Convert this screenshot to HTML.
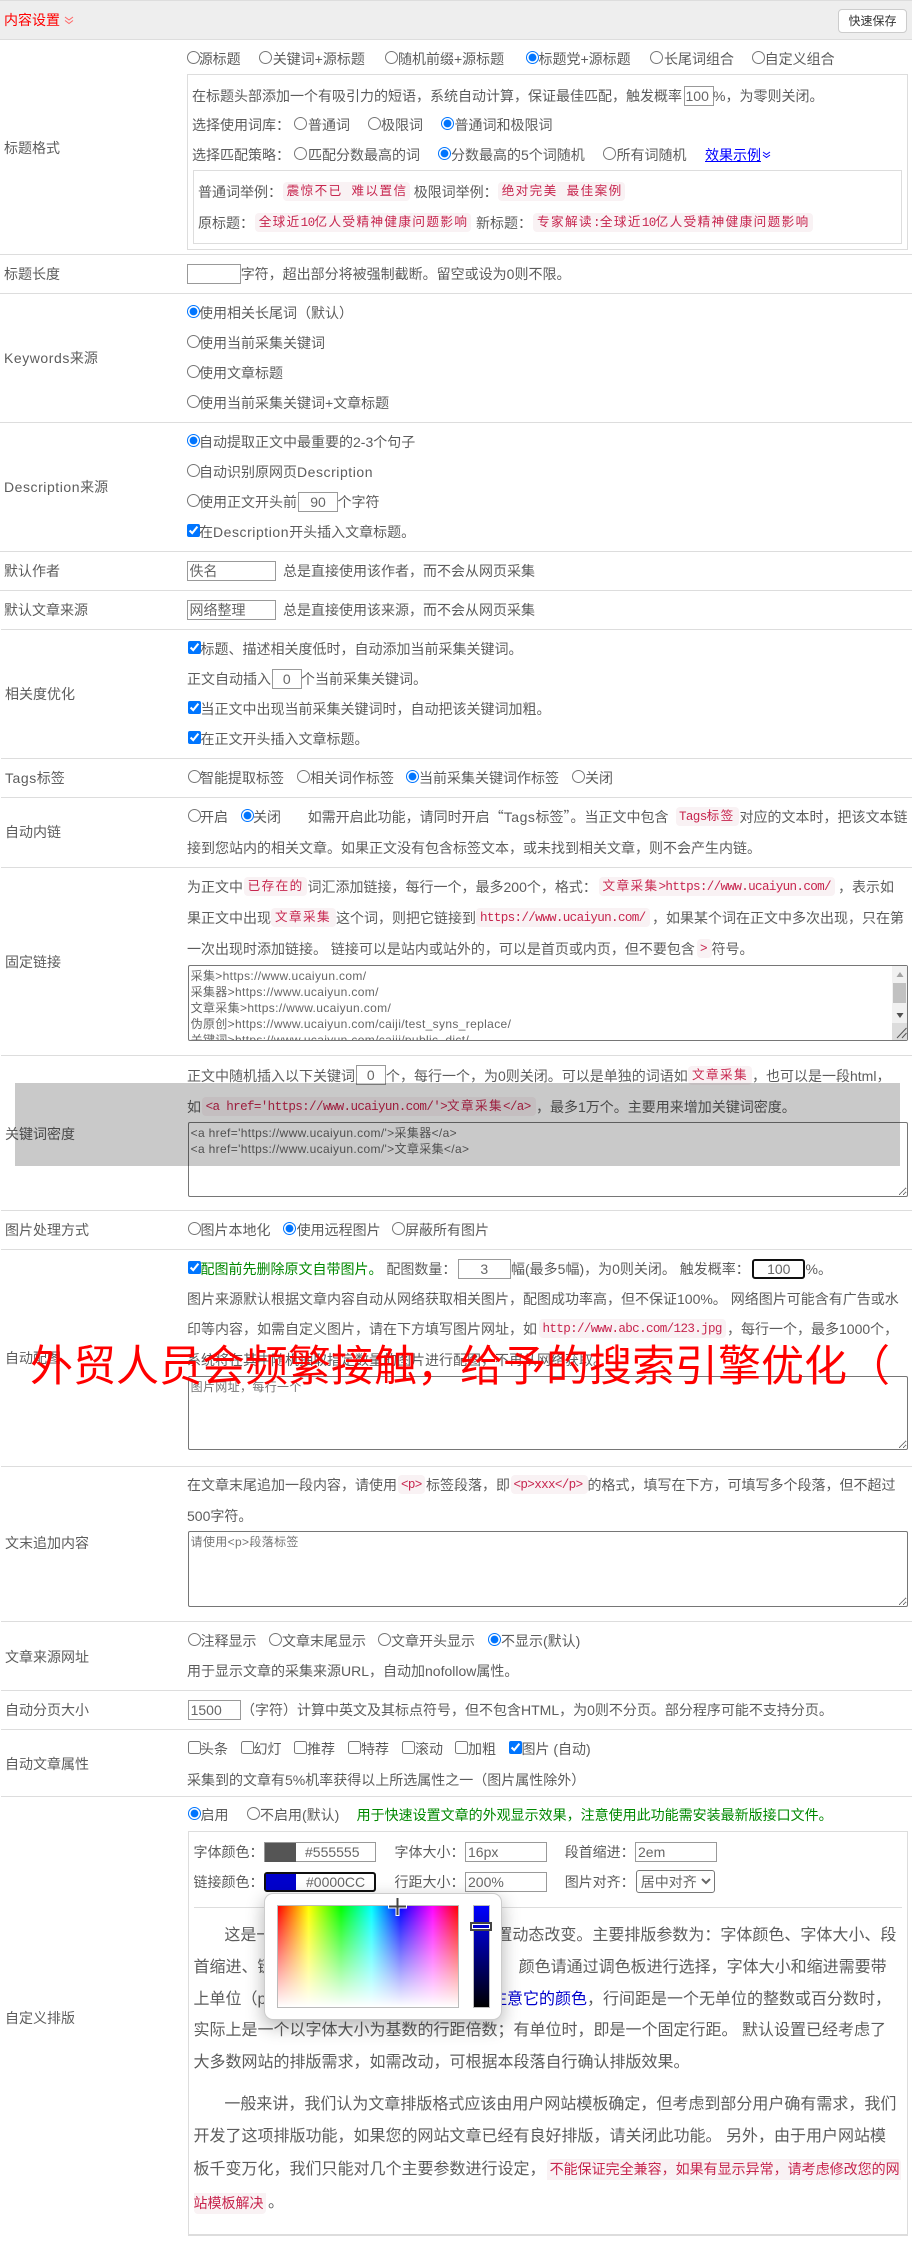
<!DOCTYPE html>
<html lang="zh"><head><meta charset="utf-8"><title>内容设置</title>
<style>
html,body{margin:0;padding:0;background:#fff}
body{position:relative;width:912px;height:2249px;overflow:hidden;font:14px/20px "Liberation Sans","Noto Sans CJK SC",sans-serif;color:#5c5c5c}
.hr{position:absolute;left:0;width:912px;height:1px;background:#ddd}
.l{position:absolute;left:0;width:912px;height:20px;line-height:20px;white-space:nowrap}
.l>*{position:absolute;top:0}
.l>input[type=radio],.l>input[type=checkbox]{top:2px;margin:0;width:13px;height:13px}
.i{box-sizing:border-box;height:20px;margin:0;padding:0 2px;border:1px solid #999;font:14px "Liberation Sans","Noto Sans CJK SC",sans-serif;color:#666;background:#fff;border-radius:0;outline:0}
.ctr{text-align:center}
.c{font:12.6px/21px "Liberation Mono","Noto Sans CJK SC",monospace;color:#c7254e;background:#f9f2f4;border-radius:4px;letter-spacing:1.4px;padding:0 4px;height:19px;white-space:nowrap;box-sizing:border-box;overflow:hidden}
.c b{font-weight:400;letter-spacing:-.66px}
.e{letter-spacing:.55px}
.q{font-family:"Noto Sans CJK SC",sans-serif}
.box{position:absolute;box-sizing:border-box;border:1px solid #ddd}
textarea{position:absolute;box-sizing:border-box;margin:0;padding:2px;border:1px solid #767676;border-radius:2px;font:12px/16px "Liberation Sans","Noto Sans CJK SC",sans-serif;letter-spacing:.35px;color:#666;background:#fff;overflow:hidden;outline:0}
.p{font-size:16px}
</style></head><body>

<div class="hr" style="top:0"></div>
<div style="position:absolute;left:0;top:1px;width:912px;height:38px;background:#eee"></div>
<div class="hr" style="top:39px"></div>
<div class="l" style="top:10px;color:#f00"><span style="left:4px">内容设置</span></div>
<svg style="position:absolute;left:64px;top:16px" width="10" height="9" viewBox="0 0 10 9" fill="none" stroke="#f66" stroke-width="1"><path d="M1 1l4 3 4-3M1 4.500l4 3 4-3"/></svg>
<div style="position:absolute;left:838px;top:9px;width:69px;height:24px;box-sizing:border-box;background:#fff;border:1px solid #ccc;border-radius:4px;font-size:12px;line-height:23px;text-align:center;color:#333">快速保存</div>

<!-- 标题格式 -->
<div class="l" style="top:49px">
<input type="radio" style="left:186.500px"><span style="left:198.700px">源标题</span>
<input type="radio" style="left:258.700px"><span style="left:272.700px">关键词+源标题</span>
<input type="radio" style="left:384.600px"><span style="left:398px">随机前缀+源标题</span>
<input type="radio" checked style="left:525.600px"><span style="left:538.500px">标题党+源标题</span>
<input type="radio" style="left:650px"><span style="left:664px">长尾词组合</span>
<input type="radio" style="left:752px"><span style="left:764.600px">自定义组合</span>
</div>
<div class="l" style="top:138px"><span style="left:4px">标题格式</span></div>
<div class="box" style="left:186.500px;top:74px;width:721px;height:176px"></div>
<div class="l" style="top:86px"><span style="left:192px">在标题头部添加一个有吸引力的短语，系统自动计算，保证最佳匹配，触发概率</span>
<input class="i" value="100" style="left:683.500px;width:30px;padding:0 1px"><span style="left:713px">%，为零则关闭。</span></div>
<div class="l" style="top:115px"><span style="left:192px">选择使用词库：</span>
<input type="radio" style="left:294.300px"><span style="left:308px">普通词</span>
<input type="radio" style="left:368px"><span style="left:381px">极限词</span>
<input type="radio" checked style="left:441px"><span style="left:454.500px">普通词和极限词</span></div>
<div class="l" style="top:145px"><span style="left:192px">选择匹配策略：</span>
<input type="radio" style="left:294.300px"><span style="left:308px">匹配分数最高的词</span>
<input type="radio" checked style="left:437.600px"><span style="left:451px">分数最高的5个词随机</span>
<input type="radio" style="left:603px"><span style="left:616.500px">所有词随机</span>
<span style="left:705px;color:#00f;text-decoration:underline">效果示例</span></div>
<svg style="position:absolute;left:762px;top:151px" width="9" height="8" viewBox="0 0 9 8" fill="none" stroke="#00f" stroke-width="1"><path d="M1 1l3.500 2.500L8 1M1 4l3.500 2.500L8 4"/></svg>
<div class="box" style="left:193px;top:170px;width:708.500px;height:74px"></div>
<div class="l" style="top:182px"><span style="left:198px">普通词举例：</span><span class="c" style="left:282.600px;width:127px">震惊不已 难以置信</span>
<span style="left:413.700px">极限词举例：</span><span class="c" style="left:497.700px;width:127px">绝对完美 最佳案例</span></div>
<div class="l" style="top:213px"><span style="left:198px">原标题：</span><span class="c" style="left:254.700px;width:216.500px">全球近<b>10</b>亿人受精神健康问题影响</span>
<span style="left:476px">新标题：</span><span class="c" style="left:533px;width:280px">专家解读<b>:</b>全球近<b>10</b>亿人受精神健康问题影响</span></div>
<div class="hr" style="top:254px"></div>

<!-- 标题长度 -->
<div class="l" style="top:264px"><span style="left:4px">标题长度</span><input class="i" style="left:186.500px;width:54px"><span style="left:240.700px">字符，超出部分将被强制截断。留空或设为0则不限。</span></div>
<div class="hr" style="top:293px"></div>

<!-- Keywords -->
<div class="l" style="top:348px"><span style="left:4px"><span class="e">Keywords</span>来源</span></div>
<div class="l" style="top:303px"><input type="radio" checked style="left:186.500px"><span style="left:199px">使用相关长尾词（默认）</span></div>
<div class="l" style="top:333px"><input type="radio" style="left:186.500px"><span style="left:199px">使用当前采集关键词</span></div>
<div class="l" style="top:363px"><input type="radio" style="left:186.500px"><span style="left:199px">使用文章标题</span></div>
<div class="l" style="top:393px"><input type="radio" style="left:186.500px"><span style="left:199px">使用当前采集关键词+文章标题</span></div>
<div class="hr" style="top:422px"></div>

<!-- Description -->
<div class="l" style="top:477px"><span style="left:4px"><span class="e">Description</span>来源</span></div>
<div class="l" style="top:432px"><input type="radio" checked style="left:186.500px"><span style="left:199px">自动提取正文中最重要的2-3个句子</span></div>
<div class="l" style="top:462px"><input type="radio" style="left:186.500px"><span style="left:199px">自动识别原网页<span class="e">Description</span></span></div>
<div class="l" style="top:492px"><input type="radio" style="left:186.500px"><span style="left:199px">使用正文开头前</span><input class="i ctr" value="90" style="left:298px;width:40px"><span style="left:337.500px">个字符</span></div>
<div class="l" style="top:522px"><input type="checkbox" checked style="left:186.500px"><span style="left:199px">在<span class="e">Description</span>开头插入文章标题。</span></div>
<div class="hr" style="top:551px"></div>

<!-- 默认作者 -->
<div class="l" style="top:561px"><span style="left:4px">默认作者</span><input class="i" value="佚名" style="left:186.500px;width:89px"><span style="left:283px">总是直接使用该作者，而不会从网页采集</span></div>
<div class="hr" style="top:590px"></div>
<div class="l" style="top:600px"><span style="left:4px">默认文章来源</span><input class="i" value="网络整理" style="left:186.500px;width:89px"><span style="left:283px">总是直接使用该来源，而不会从网页采集</span></div>
<div class="hr" style="top:629px;left:1px"></div>

<!-- 相关度优化 -->
<div class="l" style="top:684px"><span style="left:5px">相关度优化</span></div>
<div class="l" style="top:639px"><input type="checkbox" checked style="left:188px"><span style="left:200.500px">标题、描述相关度低时，自动添加当前采集关键词。</span></div>
<div class="l" style="top:669px"><span style="left:187px">正文自动插入</span><input class="i ctr" value="0" style="left:272px;width:29.500px"><span style="left:301px">个当前采集关键词。</span></div>
<div class="l" style="top:699px"><input type="checkbox" checked style="left:188px"><span style="left:200.500px">当正文中出现当前采集关键词时，自动把该关键词加粗。</span></div>
<div class="l" style="top:729px"><input type="checkbox" checked style="left:188px"><span style="left:200.500px">在正文开头插入文章标题。</span></div>
<div class="hr" style="top:758px;left:1px"></div>

<!-- Tags -->
<div class="l" style="top:768px"><span style="left:5px"><span class="e">Tags</span>标签</span>
<input type="radio" style="left:188px"><span style="left:200px">智能提取标签</span>
<input type="radio" style="left:296.600px"><span style="left:310px">相关词作标签</span>
<input type="radio" checked style="left:405.600px"><span style="left:419px">当前采集关键词作标签</span>
<input type="radio" style="left:572px"><span style="left:585px">关闭</span></div>
<div class="hr" style="top:797px;left:1px"></div>

<!-- 自动内链 -->
<div class="l" style="top:822px"><span style="left:5px">自动内链</span></div>
<div class="l" style="top:807px"><input type="radio" style="left:188px"><span style="left:200px">开启</span>
<input type="radio" checked style="left:240.700px"><span style="left:253px">关闭</span>
<span style="left:307.700px">如需开启此功能，请同时开启<span class="q">“</span><span class="e">Tags</span>标签<span class="q">”</span>。当正文中包含</span>
<span class="c" style="left:676px;width:63px;padding:0 3px"><b>Tags</b>标签</span>
<span style="left:739.500px">对应的文本时，把该文本链</span></div>
<div class="l" style="top:838px"><span style="left:187px">接到您站内的相关文章。如果正文没有包含标签文本，或未找到相关文章，则不会产生内链。</span></div>
<div class="hr" style="top:867px;left:1px"></div>

<!-- 固定链接 -->
<div class="l" style="top:952px"><span style="left:5px">固定链接</span></div>
<div class="l" style="top:877px"><span style="left:187px">为正文中</span><span class="c" style="left:243.600px;width:63.500px">已存在的</span>
<span style="left:307.500px">词汇添加链接，每行一个，最多200个，格式：</span>
<span class="c" style="left:598.500px;width:236.500px">文章采集<b>&gt;https://www.ucaiyun.com/</b></span>
<span style="left:838px">，表示如</span></div>
<div class="l" style="top:908px"><span style="left:187px">果正文中出现</span><span class="c" style="left:271px;width:64.700px">文章采集</span>
<span style="left:336px">这个词，则把它链接到</span>
<span class="c" style="left:476px;width:174px"><b>https://www.ucaiyun.com/</b></span>
<span style="left:652px">，如果某个词在正文中多次出现，只在第</span></div>
<div class="l" style="top:939px"><span style="left:187px">一次出现时添加链接。 链接可以是站内或站外的，可以是首页或内页，但不要包含</span>
<span class="c" style="left:697px;width:14.500px;padding:0 3px"><b>&gt;</b></span><span style="left:711.500px">符号。</span></div>
<textarea readonly style="left:187.600px;top:965px;width:720.400px;height:76px;resize:none">采集&gt;https://www.ucaiyun.com/
采集器&gt;https://www.ucaiyun.com/
文章采集&gt;https://www.ucaiyun.com/
伪原创&gt;https://www.ucaiyun.com/caiji/test_syns_replace/
关键词&gt;https://www.ucaiyun.com/caiji/public_dict/</textarea>
<div style="position:absolute;left:891.500px;top:966px;width:15.500px;height:74px;background:#f1f1f1"></div>
<div style="position:absolute;left:893px;top:983px;width:13px;height:20px;background:#c1c1c1"></div>
<div style="position:absolute;left:891.500px;top:1023px;width:15.500px;height:17px;background:#dcdcdc"></div>
<svg style="position:absolute;left:891.500px;top:966px" width="16" height="74" viewBox="0 0 16 74" fill="none"><path d="M8 6l3.500 5h-7z" fill="#a3a3a3"/><path d="M8 52l-3.500-5h7z" fill="#505050"/><path d="M14.500 62L5 72M14.500 67L10 72" stroke="#555" stroke-width="1"/></svg>
<div class="hr" style="top:1055px;left:1px"></div>

<!-- 关键词密度 -->
<div class="l" style="top:1124px"><span style="left:5px">关键词密度</span></div>
<div class="l" style="top:1066px"><span style="left:187px">正文中随机插入以下关键词</span><input class="i ctr" value="0" style="left:355.500px;top:-1px;width:30.500px"><span style="left:386px">个，每行一个，为0则关闭。可以是单独的词语如</span>
<span class="c" style="left:688px;width:64px">文章采集</span><span style="left:752px">，也可以是一段html，</span></div>
<div class="l" style="top:1097px"><span style="left:187px">如</span><span class="c" style="left:201.600px;width:334px"><b>&lt;a href='https://www.ucaiyun.com/'&gt;</b>文章采集<b>&lt;/a&gt;</b></span>
<span style="left:536px">，最多1万个。主要用来增加关键词密度。</span></div>
<textarea readonly style="left:187.600px;top:1122px;width:720.400px;height:75px;resize:both">&lt;a href='https://www.ucaiyun.com/'&gt;采集器&lt;/a&gt;
&lt;a href='https://www.ucaiyun.com/'&gt;文章采集&lt;/a&gt;</textarea>
<div class="hr" style="top:1210px;left:1px"></div>

<!-- 图片处理方式 -->
<div class="l" style="top:1220px"><span style="left:5px">图片处理方式</span>
<input type="radio" style="left:188px"><span style="left:200.500px">图片本地化</span>
<input type="radio" checked style="left:282.600px"><span style="left:296.600px">使用远程图片</span>
<input type="radio" style="left:391.600px"><span style="left:405px">屏蔽所有图片</span></div>
<div class="hr" style="top:1249px;left:1px"></div>

<!-- 自动配图 -->
<div class="l" style="top:1348px"><span style="left:5px">自动配图</span></div>
<div class="l" style="top:1259px"><input type="checkbox" checked style="left:188px"><span style="left:200.500px;color:#080">配图前先删除原文自带图片。</span>
<span style="left:386.400px">配图数量：</span><input class="i ctr" value="3" style="left:457.500px;width:53.500px">
<span style="left:511px">幅(最多5幅)，为0则关闭。 触发概率：</span>
<input class="i ctr" value="100" style="left:752.300px;width:53px;border:2px solid #101010;border-radius:3px"><span style="left:805.500px">%。</span></div>
<div class="l" style="top:1289px"><span style="left:187px">图片来源默认根据文章内容自动从网络获取相关图片，配图成功率高，但不保证100%。 网络图片可能含有广告或水</span></div>
<div class="l" style="top:1319px"><span style="left:187px">印等内容，如需自定义图片，请在下方填写图片网址，如</span><span class="c" style="left:538.500px;width:187.500px"><b>http://www.abc.com/123.jpg</b></span><span style="left:727px">，每行一个，最多1000个，</span></div>
<div class="l" style="top:1350px"><span style="left:187px">系统将在其中随机抽取指定数量的图片进行配图，不再从网络获取。</span></div>
<textarea readonly placeholder="图片网址，每行一个" style="left:187.600px;top:1376px;width:720.400px;height:74px;resize:both"></textarea>
<div class="hr" style="top:1466px;left:1px"></div>

<!-- 文末追加内容 -->
<div class="l" style="top:1533px"><span style="left:5px">文末追加内容</span></div>
<div class="l" style="top:1475px"><span style="left:187px">在文章末尾追加一段内容，请使用</span><span class="c" style="left:398px;width:27.400px;padding:0 3px"><b>&lt;p&gt;</b></span>
<span style="left:426px">标签段落，即</span><span class="c" style="left:510.500px;width:77px;padding:0 3px"><b>&lt;p&gt;xxx&lt;/p&gt;</b></span>
<span style="left:587.500px">的格式，填写在下方，可填写多个段落，但不超过</span></div>
<div class="l" style="top:1506px"><span style="left:187px">500字符。</span></div>
<textarea readonly placeholder="请使用&lt;p&gt;段落标签" style="left:187.600px;top:1531px;width:720.400px;height:76px;resize:both"></textarea>
<div class="hr" style="top:1621px;left:1px"></div>

<!-- 文章来源网址 -->
<div class="l" style="top:1647px"><span style="left:5px">文章来源网址</span></div>
<div class="l" style="top:1631px"><input type="radio" style="left:188px"><span style="left:200.500px">注释显示</span>
<input type="radio" style="left:268.600px"><span style="left:282px">文章末尾显示</span>
<input type="radio" style="left:377.600px"><span style="left:391px">文章开头显示</span>
<input type="radio" checked style="left:488.300px"><span style="left:501px">不显示(默认)</span></div>
<div class="l" style="top:1661px"><span style="left:187px">用于显示文章的采集来源URL，自动加nofollow属性。</span></div>
<div class="hr" style="top:1690px;left:1px"></div>

<!-- 自动分页大小 -->
<div class="l" style="top:1700px"><span style="left:5px">自动分页大小</span><input class="i" value="1500" style="left:187.600px;width:53.400px">
<span style="left:241px">（字符）计算中英文及其标点符号，但不包含HTML，为0则不分页。部分程序可能不支持分页。</span></div>
<div class="hr" style="top:1729px;left:1px"></div>

<!-- 自动文章属性 -->
<div class="l" style="top:1754px"><span style="left:5px">自动文章属性</span></div>
<div class="l" style="top:1739px"><input type="checkbox" style="left:188px"><span style="left:200px">头条</span>
<input type="checkbox" style="left:240.700px"><span style="left:253.500px">幻灯</span>
<input type="checkbox" style="left:293.700px"><span style="left:307px">推荐</span>
<input type="checkbox" style="left:348px"><span style="left:361px">特荐</span>
<input type="checkbox" style="left:401.500px"><span style="left:415px">滚动</span>
<input type="checkbox" style="left:455px"><span style="left:468px">加粗</span>
<input type="checkbox" checked style="left:508.700px"><span style="left:521.500px">图片 (自动)</span></div>
<div class="l" style="top:1770px"><span style="left:187px">采集到的文章有5%机率获得以上所选属性之一（图片属性除外）</span></div>
<div class="hr" style="top:1796px;left:1px"></div>

<!-- 自定义排版 -->
<div class="l" style="top:2008px"><span style="left:5px">自定义排版</span></div>
<div class="l" style="top:1805px"><input type="radio" checked style="left:188px"><span style="left:200.500px">启用</span>
<input type="radio" style="left:246.500px"><span style="left:260px">不启用(默认)</span>
<span style="left:356.600px;color:#080">用于快速设置文章的外观显示效果，注意使用此功能需安装最新版接口文件。</span></div>
<div class="box" style="left:187.600px;top:1831px;width:720.400px;height:405px;border-bottom-width:2px"></div>

<div class="l" style="top:1842px"><span style="left:193.500px">字体颜色：</span>
<input class="i" value="#555555" style="left:264px;width:112.400px;padding-left:40px">
<span style="left:264.500px;top:.5px;width:31.500px;height:19px;background:#555"></span>
<span style="left:394.500px">字体大小：</span><input class="i" value="16px" style="left:465px;width:82px">
<span style="left:564.700px">段首缩进：</span><input class="i" value="2em" style="left:635px;width:81.800px"></div>
<div class="l" style="top:1872px"><span style="left:193.500px">链接颜色：</span>
<input class="i" value="#0000CC" style="left:264px;width:112.400px;padding-left:40px;border:2px solid #101010;border-radius:3px">
<span style="left:265.500px;top:2px;width:30px;height:16px;background:#00c"></span>
<span style="left:394.500px">行距大小：</span><input class="i" value="200%" style="left:465px;width:82px">
<span style="left:564.700px">图片对齐：</span>
<select style="left:635.800px;top:-2px;width:79.500px;height:23px;margin:0;font:14px 'Liberation Sans','Noto Sans CJK SC',sans-serif;color:#666;background:#fff;border:1px solid #767676;border-radius:3px;padding:0"><option>居中对齐</option></select></div>
<div style="position:absolute;left:193.500px;top:1907px;width:708.500px;height:1px;background:#ddd"></div>

<div class="l p" style="top:1926px"><span style="left:224.400px">这是一段预览文字，显示效果随排版设置动态改变。主要排版参数为：字体颜色、字体大小、段</span></div>
<div class="l p" style="top:1958px"><span style="left:193.500px">首缩进、链接颜色、行距大小、图片对齐。</span><span style="left:518.600px">颜色请通过调色板进行选择，字体大小和缩进需要带</span></div>
<div class="l p" style="top:1990px"><span style="left:193.500px">上单位（px、em），这是一个链接，请</span><span style="left:491px;color:#00c">注意它的颜色</span><span style="left:587px">，行间距是一个无单位的整数或百分数时，</span></div>
<div class="l p" style="top:2021px"><span style="left:193.500px">实际上是一个以字体大小为基数的行距倍数；有单位时，即是一个固定行距。 默认设置已经考虑了</span></div>
<div class="l p" style="top:2053px"><span style="left:193.500px">大多数网站的排版需求，如需改动，可根据本段落自行确认排版效果。</span></div>
<div class="l p" style="top:2095px"><span style="left:224.400px">一般来讲，我们认为文章排版格式应该由用户网站模板确定，但考虑到部分用户确有需求，我们</span></div>
<div class="l p" style="top:2127px"><span style="left:193.500px">开发了这项排版功能，如果您的网站文章已经有良好排版，请关闭此功能。 另外，由于用户网站模</span></div>
<div class="l p" style="top:2160px"><span style="left:193.500px">板千变万化，我们只能对几个主要参数进行设定，</span>
<span style="left:546.600px;top:-1px;width:354.500px;height:21px;background:#f9f2f4;color:#c7254e;font-size:14px;line-height:21px;padding-left:3px;box-sizing:border-box;border-radius:4px 4px 0 0">不能保证完全兼容，如果有显示异常，请考虑修改您的网</span></div>
<div class="l p" style="top:2193px"><span style="left:193.500px;top:0;width:72.800px;height:21px;background:#f9f2f4;color:#c7254e;font-size:14px;line-height:21px;border-radius:0 0 4px 4px">站模板解决</span><span style="left:268px">。</span></div>

<!-- 颜色选择器 -->
<div style="position:absolute;left:264px;top:1893px;width:238px;height:127px;box-sizing:border-box;background:#fff;border:1px solid #ccc;border-radius:9px;box-shadow:0 6px 18px rgba(0,0,0,.3)"></div>
<div style="position:absolute;left:277px;top:1905px;width:182px;height:103px;box-sizing:border-box;border:1px solid #bbb;background:linear-gradient(to bottom,rgba(255,255,255,0),#fff),linear-gradient(to right,#f00,#ff0 17%,#0f0 35%,#0ff 52%,#00f 68%,#f0f 86%,#f00)"></div>
<div style="position:absolute;left:472.500px;top:1905px;width:17px;height:103px;box-sizing:border-box;border:1px solid #bbb;background:linear-gradient(to bottom,#00f,#000)"></div>
<div style="position:absolute;left:470px;top:1922px;width:22px;height:9px;box-sizing:border-box;border:2px solid #444;background:#00c;box-shadow:inset 0 0 0 1px #fff"></div>
<svg style="position:absolute;left:387px;top:1896px" width="21" height="21" viewBox="0 0 21 21"><path d="M10.500 1v19M1 10.500h19" stroke="#fff" stroke-width="4"/><path d="M10.500 2v17M2 10.500h17" stroke="#444" stroke-width="2"/></svg>

<!-- 水印层 -->
<div style="position:absolute;left:15px;top:1083px;width:885px;height:83px;background:rgba(0,0,0,.21)"></div>
<div style="position:absolute;left:30px;top:1337px;white-space:nowrap;font-size:43px;line-height:60px;color:#f00">外贸人员会频繁接触，给予的搜索引擎优化（</div>

</body></html>
